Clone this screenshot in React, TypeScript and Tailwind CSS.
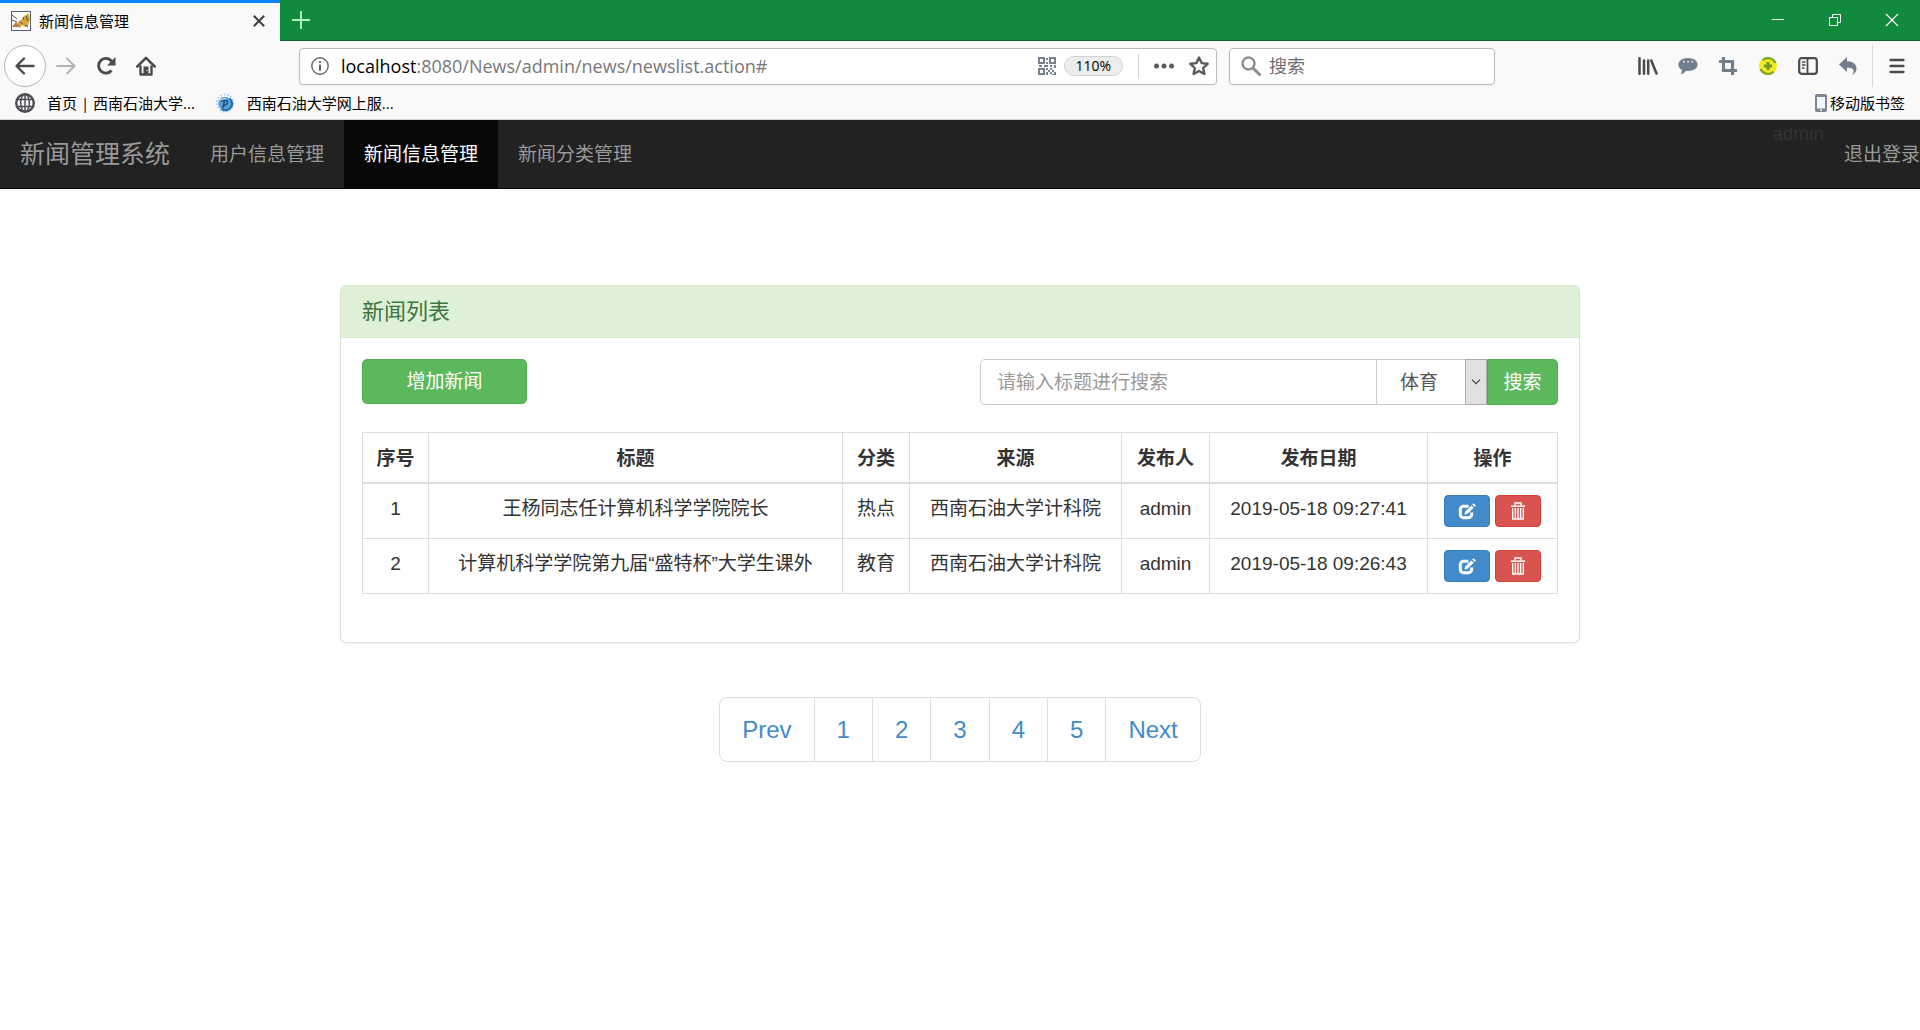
import React from "react";

const UI = "font-['Open_Sans','Noto_Sans_CJK_SC',sans-serif]";

const news = [
  { id: 1, title: "王杨同志任计算机科学学院院长", type: "热点", source: "西南石油大学计科院", author: "admin", date: "2019-05-18 09:27:41" },
  { id: 2, title: "计算机科学学院第九届“盛特杯”大学生课外", type: "教育", source: "西南石油大学计科院", author: "admin", date: "2019-05-18 09:26:43" },
];

function TomcatIcon() {
  return (
    <svg width="20" height="20" viewBox="0 0 20 20">
      <rect x="0.5" y="0.5" width="19" height="19" fill="#fff" stroke="#54606b" />
      <path d="M5 14l3-4 3-2 2-3 5-3 1 6-2 7-3 1-3-2-2 3z" fill="#d9a93c" />
      <path d="M1 4l5 4M1 9l5 2M12 6l1 3M9 11l3 2M3 14l3 2M14 14l3 2M15 5l2 5" stroke="#4d4d52" fill="none" />
      <path d="M1 16l4-5 4 5z" fill="#b9784a" />
    </svg>
  );
}

function BackIcon() {
  return (
    <svg width="20" height="20" viewBox="0 0 20 20" fill="none" stroke="#4a4a4f" strokeWidth="2.4" strokeLinecap="round" strokeLinejoin="round">
      <path d="M18.5 10H2M9 2.5L1.5 10 9 17.5" />
    </svg>
  );
}

function ForwardIcon() {
  return (
    <svg width="20" height="20" viewBox="0 0 20 20" fill="none" stroke="#b4b4b6" strokeWidth="2" strokeLinecap="round" strokeLinejoin="round">
      <path d="M1 10h17M11 2.5l7.500 7.500-7.500 7.500" />
    </svg>
  );
}

function ReloadIcon() {
  return (
    <svg width="20" height="20" viewBox="0 0 20 20">
      <path d="M15.500 14.500A7.300 7.300 0 1 1 15 4.500L17.500 7.500" fill="none" stroke="#4a4a4f" strokeWidth="2.800" />
      <path d="M19.500 1v8.500H11z" fill="#4a4a4f" />
    </svg>
  );
}

function HomeIcon() {
  return (
    <svg width="20" height="20" viewBox="0 0 20 20">
      <path d="M1.300 10.500L10 1.800l8.700 8.700" fill="none" stroke="#4a4a4f" strokeWidth="2.500" strokeLinecap="round" strokeLinejoin="round" />
      <path d="M4.500 9.500v9h11v-9" fill="none" stroke="#4a4a4f" strokeWidth="2.400" strokeLinejoin="round" />
      <path d="M7.500 10.500h5V19h-5z" fill="#4a4a4f" />
      <path d="M10.500 14h1v1h-1z" fill="#fff" />
    </svg>
  );
}

function InfoIcon() {
  return (
    <svg width="18" height="18" viewBox="0 0 18 18">
      <circle cx="9" cy="9" r="8.200" fill="none" stroke="#6b6b6f" strokeWidth="1.400" />
      <path d="M8 4h2v2H8zM8 7.500h2V14H8z" fill="#6b6b6f" />
    </svg>
  );
}

function QrIcon() {
  return (
    <svg width="18" height="18" viewBox="0 0 18 18" fill="#76808e">
      <path fillRule="evenodd" d="M0 0h7v7H0zM2 2v3h3V2zM11 0h7v7h-7zM13 2v3h3V2zM0 11h7v7H0zM2 13v3h3v-3z" />
      <path d="M8 1h2v2H8zM8 5h2v2H8zM1 8h3v2H1zM6 8h4v2H6zM12 8h2v2h-2zM16 8h2v3h-2zM8 11h2v2H8zM10 13h2v2h-2zM12 11h2v2h-2zM14 13h2v2h-2zM8 15h2v3H8zM12 15h2v2h-2zM16 15h2v3h-2zM14 17h2v1h-2z" />
    </svg>
  );
}

function DotsIcon() {
  return (
    <svg width="20" height="6" viewBox="0 0 20 6" fill="#5b5b5f">
      <circle cx="2.500" cy="3" r="2.500" />
      <circle cx="10" cy="3" r="2.500" />
      <circle cx="17.500" cy="3" r="2.500" />
    </svg>
  );
}

function StarIcon() {
  return (
    <svg width="20" height="20" viewBox="0 0 20 20" fill="none" stroke="#5b5b5f" strokeWidth="2.400" strokeLinejoin="round">
      <path d="M10 1.500l2.600 5.600 6 .7-4.400 4.200 1.200 6L10 15l-5.400 3 1.200-6L1.400 7.800l6-.7z" />
    </svg>
  );
}

function MagnifierIcon() {
  return (
    <svg width="20" height="20" viewBox="0 0 20 20" fill="none" stroke="#8c8c90">
      <circle cx="7.500" cy="7.500" r="6" strokeWidth="2.400" />
      <path d="M12 12l6.500 6.500" strokeWidth="3" strokeLinecap="round" />
    </svg>
  );
}

function LibraryIcon() {
  return (
    <svg width="20" height="18" viewBox="0 0 20 18" fill="none" stroke="#4a4a4f" strokeWidth="2.500" strokeLinecap="round">
      <path d="M1.500 1.200v15.600M6 3.500v13.300M10.200 3.500v13.300M13.300 3.500l5.200 13" />
    </svg>
  );
}

function ChatIcon() {
  return (
    <svg width="20" height="18" viewBox="0 0 20 18">
      <path d="M10 1c5.400 0 9.600 2.800 9.600 6.500S15.400 14 10 14c-.8 0-1.500 0-2.200-.1C6.500 15.800 4.500 17 2.500 17c1-1 1.600-2.500 1.500-4C1.800 11.800.4 9.800.4 7.500.4 3.800 4.600 1 10 1z" fill="#727e8b" />
      <path d="M5 4h1.500v1.500H5zM9.300 4h1.500v1.500H9.300zM13.600 4h1.500v1.500h-1.500z" fill="#fff" />
    </svg>
  );
}

function CropIcon() {
  return (
    <svg width="18" height="18" viewBox="0 0 18 18" fill="none" stroke="#727e8b" strokeWidth="3.200">
      <path d="M4.500 0v13.500H18M0 4.500h13.500V18" />
    </svg>
  );
}

function PlusBadgeIcon() {
  return (
    <svg width="18" height="18" viewBox="0 0 18 18">
      <circle cx="9" cy="9" r="9" fill="#f2ea1c" />
      <path d="M3.500 3.200A8.200 8.200 0 0 1 16.500 6M14.500 14.800A8.200 8.200 0 0 1 1.500 12" fill="none" stroke="#7fa52b" strokeWidth="2.200" />
      <path d="M9 5v8M5 9h8" stroke="#6b9a2d" strokeWidth="3" />
    </svg>
  );
}

function SidebarIcon() {
  return (
    <svg width="20" height="18" viewBox="0 0 20 18" fill="none" stroke="#4a4a4f">
      <rect x="1.200" y="1.200" width="17.600" height="15.600" rx="2.500" strokeWidth="2.200" />
      <path d="M9.500 1v16" strokeWidth="1.800" />
      <path d="M4 5h3.500M4 8h3.500M4 11h2.500" strokeWidth="1.300" />
    </svg>
  );
}

function UndoIcon() {
  return (
    <svg width="18" height="18" viewBox="0 0 18 18">
      <path d="M8 0v4.200c5.500 0 9.500 2.600 9.500 7.300 0 3.200-2 5.500-4.500 6.300 1.300-1.300 1.900-2.800 1.500-4.300-.6-2-3-2.900-6.500-2.900V15L0 7.500z" fill="#727e8b" />
    </svg>
  );
}

function MenuIcon() {
  return (
    <svg width="16" height="16" viewBox="0 0 16 16" stroke="#4a4a4f" strokeWidth="2.300" strokeLinecap="round">
      <path d="M1.500 2h13M1.500 8h13M1.500 14h13" />
    </svg>
  );
}

function GlobeIcon() {
  return (
    <svg width="20" height="20" viewBox="0 0 20 20" fill="none" stroke="#4f4f53" strokeWidth="1.500">
      <circle cx="10" cy="10" r="8.800" strokeWidth="2.400" />
      <ellipse cx="10" cy="10" rx="4.300" ry="8.800" />
      <path d="M10 1v18M2 6.500h16M2 13.500h16" />
    </svg>
  );
}

function UniversityIcon() {
  return (
    <svg width="20" height="20" viewBox="0 0 20 20">
      <circle cx="10" cy="10" r="8.500" fill="none" stroke="#a9cbe6" strokeWidth="2" strokeDasharray="1.500 2" />
      <circle cx="10" cy="10.500" r="6.800" fill="#5aa2d8" />
      <path d="M14.500 5.500a6.500 6.500 0 0 1-8 10.500" fill="none" stroke="#1d6cae" strokeWidth="2" />
      <path d="M6 8.500c2-1.500 6-2 6.500.5.400 2-2 3.500-4 3.500M9.500 8l-1.500 7" fill="none" stroke="#134f86" strokeWidth="1.500" />
      <path d="M5 7.500c2-1.500 4-2 6-1.500" fill="none" stroke="#e9f4fc" />
    </svg>
  );
}

function PhoneIcon() {
  return (
    <svg width="12" height="18" viewBox="0 0 12 18">
      <rect width="12" height="18" rx="2" fill="#7d8794" />
      <path d="M2 3h8v11.500H2z" fill="#f3f6fb" />
      <circle cx="6" cy="16.200" r="0.900" fill="#fff" />
    </svg>
  );
}

function EditIcon() {
  return (
    <svg width="18" height="17" viewBox="0 0 18 17">
      <path d="M10.500 3.300H5.500A3.200 3.200 0 0 0 2.300 6.500v5a3.200 3.200 0 0 0 3.200 3.200h5a3.200 3.200 0 0 0 3.200-3.200V9.500" fill="none" stroke="#fff" strokeWidth="3" />
      <path d="M6.500 11.500l.5-2.800 6.300-6.300 2.400 2.400-6.300 6.300zM14.200 1.500L15.500.2l2.400 2.400-1.300 1.300z" fill="#fff" />
    </svg>
  );
}

function TrashIcon() {
  return (
    <svg width="16" height="18" viewBox="0 0 16 18" fill="none" stroke="#fff">
      <path d="M5 3.500v-2.500h6v2.500" strokeWidth="1.400" />
      <path d="M1 4.200h14" strokeWidth="1.600" />
      <path d="M2.700 6v11h10.600V6M5.400 6v11M8 6v11M10.600 6v11" strokeWidth="1.400" />
    </svg>
  );
}

function BrowserChrome() {
  const tool = "flex w-10 items-center justify-center";
  return (
    <header className={`${UI} text-black`}>
      <div className="flex h-[41px] border-b border-[#0b6430] bg-[#118a3e]">
        <div className="-mb-px flex w-[280px] items-center border-t-[3px] border-[#0a84ff] bg-[#f9f9fa] pb-[3px] pr-[7px] pl-[11px]">
          <TomcatIcon />
          <span className="ml-2 flex-1 text-[15px] leading-5">新闻信息管理</span>
          <button aria-label="关闭标签页" className="flex h-7 w-7 items-center justify-center">
            <svg width="12" height="12" viewBox="0 0 12 12" stroke="#3f3f43" strokeWidth="2"><path d="M.8.8l10.400 10.400M11.200.8L.8 11.200" /></svg>
          </button>
        </div>
        <button aria-label="新建标签页" className="flex w-[42px] items-center justify-center">
          <svg width="18" height="18" viewBox="0 0 18 18" stroke="#a9efc0" strokeWidth="2"><path d="M9 0v18M0 9h18" /></svg>
        </button>
        <div className="ml-auto flex text-white">
          <button aria-label="最小化" className="flex w-[57px] items-center justify-center">
            <svg width="12" height="12" viewBox="0 0 12 12" stroke="#fff"><path d="M0 5.500h12" /></svg>
          </button>
          <button aria-label="还原" className="flex w-[57px] items-center justify-center">
            <svg width="12" height="12" viewBox="0 0 12 12" fill="none" stroke="#fff"><path d="M.5 3.500h8v8h-8zM3.500 3.500v-3h8v8h-3" /></svg>
          </button>
          <button aria-label="关闭" className="flex w-[57px] items-center justify-center">
            <svg width="14" height="14" viewBox="0 0 14 14" stroke="#fff" strokeWidth="1.200"><path d="M1 1l12 12M13 1L1 13" /></svg>
          </button>
        </div>
      </div>

      <div className="flex h-[50px] items-center bg-[#f9f9fa] pl-1">
        <button aria-label="后退" className="flex h-[42px] w-[42px] items-center justify-center rounded-full border border-[#b5b5b7] bg-white"><BackIcon /></button>
        <button aria-label="前进" className={tool}><ForwardIcon /></button>
        <button aria-label="刷新" className={tool}><ReloadIcon /></button>
        <button aria-label="主页" className={tool}><HomeIcon /></button>
        <div className="ml-[133px] flex h-[37px] min-w-0 flex-[919] items-center rounded-sm border border-[#bcbcbe] bg-white shadow-xs">
          <button aria-label="网站信息" className="ml-[11px]"><InfoIcon /></button>
          <div className="ml-3 min-w-0 flex-1 truncate text-lg leading-6 text-[#77777a]">
            <span className="text-black">localhost</span>:8080/News/admin/news/newslist.action#
          </div>
          <button aria-label="二维码"><QrIcon /></button>
          <button className="ml-2 h-5 w-[59px] rounded-full border border-[#d2d2d4] bg-[#ededee] text-[14px] leading-4">110%</button>
          <div className="ml-[15px] h-[25px] w-px bg-[#d4d4d6]" />
          <button aria-label="页面操作" className="ml-[15px]"><DotsIcon /></button>
          <button aria-label="收藏" className="mr-[7px] ml-[15px]"><StarIcon /></button>
        </div>
        <div className="ml-3 flex h-[37px] min-w-0 flex-[265] items-center rounded-sm border border-[#bcbcbe] bg-white shadow-xs">
          <span className="ml-[11px]"><MagnifierIcon /></span>
          <input aria-label="浏览器搜索" placeholder="搜索" className="ml-2 w-full min-w-0 text-lg leading-6 outline-none placeholder:text-[#6e6e70]" />
        </div>
        <div className="ml-[133px] flex">
          <button aria-label="书库" className={tool}><LibraryIcon /></button>
          <button aria-label="消息" className={tool}><ChatIcon /></button>
          <button aria-label="截图" className={tool}><CropIcon /></button>
          <button aria-label="扩展" className={tool}><PlusBadgeIcon /></button>
          <button aria-label="侧栏" className={tool}><SidebarIcon /></button>
          <button aria-label="撤销" className={tool}><UndoIcon /></button>
        </div>
        <div className="ml-1 h-[42px] w-px bg-[#d9d9db]" />
        <button aria-label="打开菜单" className="flex w-[47px] items-center justify-center"><MenuIcon /></button>
      </div>

      <nav aria-label="书签" className="flex h-[29px] items-center border-b border-[#d8d8da] bg-[#f9f9fa] pr-[15px] pb-1 pl-[15px] text-[15px] leading-5">
        <a href="#" className="flex items-center gap-3"><GlobeIcon />首页 | 西南石油大学...</a>
        <a href="#" className="ml-5 flex items-center gap-3"><UniversityIcon />西南石油大学网上服...</a>
        <a href="#" className="ml-auto flex items-center gap-[3px]"><PhoneIcon />移动版书签</a>
      </nav>
    </header>
  );
}

function Navbar() {
  const item = "flex items-center px-5 pt-0.5 text-[19px]";
  return (
    <nav className="flex h-[69px] border-b border-[#080808] bg-[#222] text-[#999]">
      <a href="#" className="flex items-center px-5 pt-0.5 text-[25px]">新闻管理系统</a>
      <a href="#" className={item}>用户信息管理</a>
      <a href="#" aria-current="page" className={`${item} bg-[#080808] text-white`}>新闻信息管理</a>
      <a href="#" className={item}>新闻分类管理</a>
      <span className="ml-auto text-[19px] leading-7 text-[#333]">admin</span>
      <a href="#" className="flex items-center pt-0.5 pl-5 text-[19px]">退出登录</a>
    </nav>
  );
}

function Toolbar() {
  return (
    <div className="mb-[27px] flex items-start justify-between">
      <button className="h-[45px] w-[165px] rounded-[5px] border border-[#4cae4c] bg-[#5cb85c] pt-0.5 text-[19px] text-white">增加新闻</button>
      <form className="flex h-[46px] w-[578px] text-[19px]">
        <input aria-label="标题" placeholder="请输入标题进行搜索" className="min-w-0 flex-1 rounded-l-[5px] border border-[#ccc] px-4 pt-0.5 text-[#555] outline-none placeholder:text-[#999]" />
        <div className="relative w-[110px]">
          <select aria-label="分类" className="h-full w-full appearance-none border-y border-[#ccc] bg-white pt-0.5 pl-[23px] text-[#555] outline-none">
            <option>体育</option>
            <option>热点</option>
            <option>教育</option>
          </select>
          <span className="pointer-events-none absolute inset-y-0 right-0 flex w-[22px] items-center justify-center border border-[#adadad] bg-[#e1e1e1]">
            <svg width="10" height="6" viewBox="0 0 10 6" fill="none" stroke="#444" strokeWidth="1.200"><path d="M1 .7l4 4 4-4" /></svg>
          </span>
        </div>
        <button type="button" className="w-[71px] rounded-r-[5px] border border-[#4cae4c] bg-[#5cb85c] pt-0.5 text-white">搜索</button>
      </form>
    </div>
  );
}

function NewsTable() {
  const th = "border border-b-2 border-[#ddd] pt-3 pb-2.5 font-bold";
  const td = "border border-[#ddd] py-[11px] align-top";
  const action = "flex h-8 w-[46px] items-center justify-center rounded-[4px] border";
  return (
    <table className="mb-[27px] w-full table-fixed border-collapse text-center text-[19px] leading-[27px] text-[#333]">
      <colgroup>
        <col className="w-[66px]" />
        <col />
        <col className="w-[67px]" />
        <col className="w-[212px]" />
        <col className="w-[88px]" />
        <col className="w-[218px]" />
        <col className="w-[130px]" />
      </colgroup>
      <thead>
        <tr>
          {["序号", "标题", "分类", "来源", "发布人", "发布日期", "操作"].map((h) => (
            <th key={h} scope="col" className={th}>{h}</th>
          ))}
        </tr>
      </thead>
      <tbody>
        {news.map((n) => (
          <tr key={n.id}>
            <td className={td}>{n.id}</td>
            <td className={td}>{n.title}</td>
            <td className={td}>{n.type}</td>
            <td className={td}>{n.source}</td>
            <td className={td}>{n.author}</td>
            <td className={td}>{n.date}</td>
            <td className={td}>
              <div className="flex justify-center gap-[5px]">
                <button aria-label="编辑" className={`${action} border-[#357ebd] bg-[#428bca]`}><EditIcon /></button>
                <button aria-label="删除" className={`${action} border-[#d43f3a] bg-[#d9534f]`}><TrashIcon /></button>
              </div>
            </td>
          </tr>
        ))}
      </tbody>
    </table>
  );
}

function Pagination() {
  return (
    <nav aria-label="分页" className="mt-[54px] flex justify-center">
      <ul className="flex divide-x divide-[#ddd] rounded-lg border border-[#ddd] text-2xl text-[#428bca]">
        {["Prev", "1", "2", "3", "4", "5", "Next"].map((p) => (
          <li key={p}><a href="#" className="block px-[22px] py-[13px] leading-[37px]">{p}</a></li>
        ))}
      </ul>
    </nav>
  );
}

export default function App() {
  return (
    <div className="min-h-screen bg-white font-['Liberation_Sans','Noto_Sans_CJK_SC',sans-serif]">
      <BrowserChrome />
      <Navbar />
      <main className="mx-auto mt-24 max-w-[1240px]">
        <section className="rounded-md border border-t-[#d6e9c6] border-x-[#dcdfda] border-b-[#dcdfda] shadow-xs">
          <h1 className="rounded-t-[5px] border-b border-[#d6e9c6] bg-[#dff0d8] px-[21px] py-3 text-[22px] leading-[27px] text-[#3c763d]">新闻列表</h1>
          <div className="p-[21px]">
            <Toolbar />
            <NewsTable />
          </div>
        </section>
        <Pagination />
      </main>
    </div>
  );
}
